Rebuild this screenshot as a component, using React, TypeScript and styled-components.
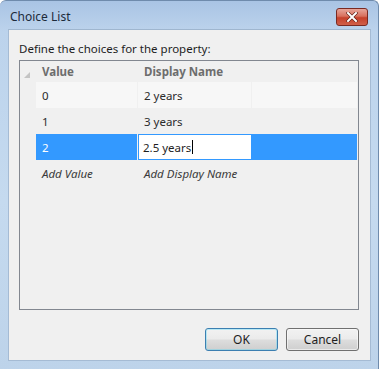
import styled, { createGlobalStyle } from "styled-components"

const Global = createGlobalStyle`
  html, body { margin: 0; padding: 0; background: #ffffff; }
  body { font-family: "Segoe UI", "Noto Sans", "Liberation Sans", sans-serif; font-size: 11.5px; }
`

const Window = styled.div`
  width: 379px;
  height: 369px;
  box-sizing: border-box;
  display: flex;
  flex-direction: column;
  background: linear-gradient(180deg, #a9c4e4 0px, #bcd3ec 30px, #c5daef 200px, #bdd3ea 369px);
  border-radius: 6px 6px 0 0;
  border: 1px solid #6f8bac;
  border-bottom: none;
  border-left: none;
`

const TitleBar = styled.div`
  height: 28px;
  display: flex;
  align-items: center;
  justify-content: space-between;
  padding: 0 10px 0 10px;
`

const Title = styled.span`
  color: #1c2a3a;
  font-size: 12px;
  padding-top: 3px;
`

const CloseButton = styled.div`
  width: 30px;
  height: 16px;
  margin-top: 3px;
  border-radius: 3px;
  border: 1px solid #7a2a22;
  background: linear-gradient(180deg, #e7a69a 0%, #d8705d 45%, #c6402a 55%, #d0604a 100%);
  display: flex;
  align-items: center;
  justify-content: center;
`

const Content = styled.div`
  flex: 1;
  margin: 0 7px 8px 8px;
  background: #f0f0f0;
  border: 1px solid #a5bbd4;
  border-top-color: #9fb6cf;
  display: flex;
  flex-direction: column;
  padding: 11px 11px 9px 10px;
`

const Prompt = styled.div`
  color: #1e1e1e;
  height: 19px;
  line-height: 16px;
`

const Grid = styled.div`
  height: 248px;
  border: 1px solid #828790;
  display: flex;
  flex-direction: column;
`

const Row = styled.div<{ $h: number }>`
  display: grid;
  grid-template-columns: 16px 102px 114px 1fr;
  height: ${(p) => p.$h}px;
`

const RowHeader = styled.div`
  position: relative;
  background: #f0f0f0;
`

const Cell = styled.div<{ $bg?: string; $color?: string; $italic?: boolean; $bold?: boolean }>`
  display: flex;
  align-items: center;
  padding-left: 6px;
  background: ${(p) => p.$bg ?? "transparent"};
  color: ${(p) => p.$color ?? "#2b2b2b"};
  font-style: ${(p) => (p.$italic ? "italic" : "normal")};
  font-weight: ${(p) => (p.$bold ? 700 : 400)};
  box-shadow: inset -1px 0 0 #f0f0f0;
  white-space: nowrap;
  overflow: hidden;
`

const EditBox = styled.div`
  display: flex;
  align-items: center;
  padding-left: 4px;
  background: #ffffff;
  border: 1px solid #3399ff;
  color: #1e1e1e;
`

const Caret = styled.span`
  display: inline-block;
  width: 1px;
  height: 14px;
  background: #000;
  margin-left: 1px;
`

const Footer = styled.div`
  flex: 1;
  display: flex;
  justify-content: flex-end;
  align-items: flex-end;
  gap: 8px;
`

const Button = styled.div<{ $focused?: boolean }>`
  width: 73px;
  height: 23px;
  box-sizing: border-box;
  border-radius: 3px;
  border: 1px solid ${(p) => (p.$focused ? "#3c7fb1" : "#707070")};
  background: linear-gradient(180deg, #f2f2f2 0%, #ebebeb 48%, #dddddd 52%, #cfcfcf 100%);
  box-shadow: inset 0 0 0 1px ${(p) => (p.$focused ? "#48d8fb55" : "#fcfcfc99")};
  display: flex;
  align-items: center;
  justify-content: center;
  color: #1e1e1e;
  font-size: 12px;
`

const rows = [
  { v: "0", d: "2 years", bg: "#f7f7f7" },
  { v: "1", d: "3 years", bg: "transparent" },
]

export default function App() {
  return (
    <>
      <Global />
      <Window>
        <TitleBar>
          <Title>Choice List</Title>
          <CloseButton>
            <svg width="12" height="10" viewBox="0 0 12 10">
              <path d="M2 1 L10 9 M10 1 L2 9" stroke="#5a1a12" strokeWidth="3.2" strokeLinecap="square" />
              <path d="M2 1 L10 9 M10 1 L2 9" stroke="#ffffff" strokeWidth="2" strokeLinecap="square" />
            </svg>
          </CloseButton>
        </TitleBar>
        <Content>
          <Prompt>Define the choices for the property:</Prompt>
          <Grid>
            <Row $h={21}>
              <RowHeader>
                <svg width="6" height="6" viewBox="0 0 6 6" style={{ position: "absolute", left: 4, bottom: 4 }}>
                  <path d="M6 0 L6 6 L0 6 Z" fill="#c4c4c4" />
                </svg>
              </RowHeader>
              <Cell $bold $color="#6d6d6d">Value</Cell>
              <Cell $bold $color="#6d6d6d">Display Name</Cell>
              <Cell />
            </Row>
            {rows.map((r) => (
              <Row $h={26} key={r.v}>
                <RowHeader />
                <Cell $bg={r.bg}>{r.v}</Cell>
                <Cell $bg={r.bg}>{r.d}</Cell>
                <Cell $bg={r.bg} />
              </Row>
            ))}
            <Row $h={26}>
              <RowHeader />
              <Cell $bg="#3399ff" $color="#ffffff">2</Cell>
              <EditBox>
                2.5 years<Caret />
              </EditBox>
              <Cell $bg="#3399ff" />
            </Row>
            <Row $h={26}>
              <RowHeader />
              <Cell $italic $color="#3a3a3a">Add Value</Cell>
              <Cell $italic $color="#3a3a3a">Add Display Name</Cell>
              <Cell />
            </Row>
          </Grid>
          <Footer>
            <Button $focused>OK</Button>
            <Button>Cancel</Button>
          </Footer>
        </Content>
      </Window>
    </>
  )
}
